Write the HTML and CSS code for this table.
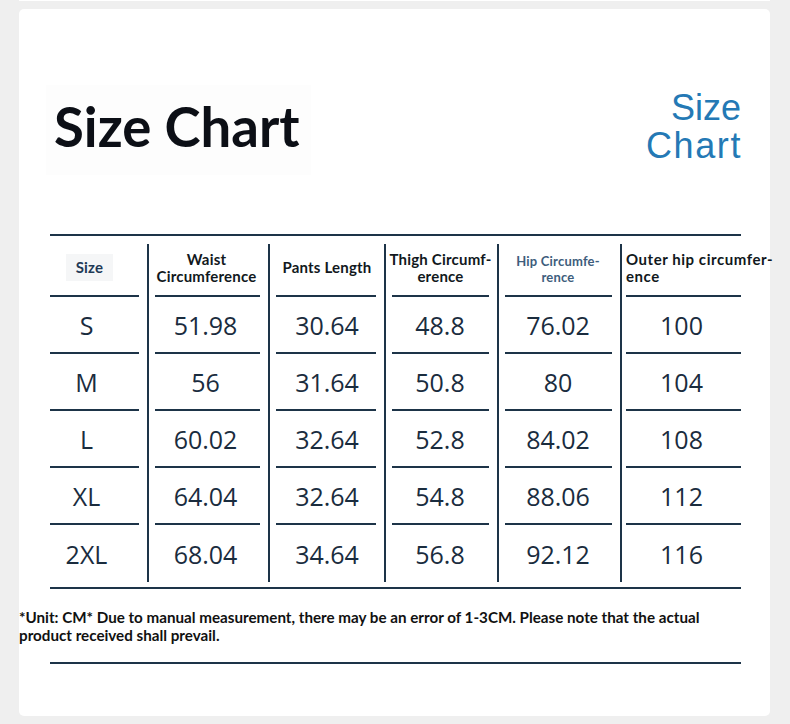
FILE: index.html
```html
<!DOCTYPE html>
<html lang="en">
<head>
<meta charset="utf-8">
<title>Size Chart</title>
<link rel="stylesheet" href="styles.css">
</head>
<body>
<div class="sliver"></div>
<main class="card">
  <header class="head">
    <div class="title-box"><h1 class="title">Size Chart</h1></div>
    <div class="title-alt">Size<br><span class="wide">Chart</span></div>
  </header>

  <div class="rule rule-top"></div>

  <div class="grid">
    <div class="cell c1 hd"><div class="in"><span class="size-tag">Size</span></div><div class="seg"></div></div>
    <div class="cell c2 hd"><div class="in">Waist<br>Circumference</div><div class="seg"></div></div>
    <div class="cell c3 hd"><div class="in">Pants Length</div><div class="seg"></div></div>
    <div class="cell c4 hd"><div class="in">Thigh Circumf-<br>erence</div><div class="seg"></div></div>
    <div class="cell c5 hd hip"><div class="in">Hip Circumfe-<br>rence</div><div class="seg"></div></div>
    <div class="cell c6 hd outer"><div class="in">Outer hip circumfer-<br>ence</div><div class="seg"></div></div>

    <div class="cell c1"><div class="in">S</div><div class="seg"></div></div>
    <div class="cell c2"><div class="in">51.98</div><div class="seg"></div></div>
    <div class="cell c3"><div class="in">30.64</div><div class="seg"></div></div>
    <div class="cell c4"><div class="in">48.8</div><div class="seg"></div></div>
    <div class="cell c5"><div class="in">76.02</div><div class="seg"></div></div>
    <div class="cell c6"><div class="in">100</div><div class="seg"></div></div>

    <div class="cell c1"><div class="in">M</div><div class="seg"></div></div>
    <div class="cell c2"><div class="in">56</div><div class="seg"></div></div>
    <div class="cell c3"><div class="in">31.64</div><div class="seg"></div></div>
    <div class="cell c4"><div class="in">50.8</div><div class="seg"></div></div>
    <div class="cell c5"><div class="in">80</div><div class="seg"></div></div>
    <div class="cell c6"><div class="in">104</div><div class="seg"></div></div>

    <div class="cell c1"><div class="in">L</div><div class="seg"></div></div>
    <div class="cell c2"><div class="in">60.02</div><div class="seg"></div></div>
    <div class="cell c3"><div class="in">32.64</div><div class="seg"></div></div>
    <div class="cell c4"><div class="in">52.8</div><div class="seg"></div></div>
    <div class="cell c5"><div class="in">84.02</div><div class="seg"></div></div>
    <div class="cell c6"><div class="in">108</div><div class="seg"></div></div>

    <div class="cell c1"><div class="in">XL</div><div class="seg"></div></div>
    <div class="cell c2"><div class="in">64.04</div><div class="seg"></div></div>
    <div class="cell c3"><div class="in">32.64</div><div class="seg"></div></div>
    <div class="cell c4"><div class="in">54.8</div><div class="seg"></div></div>
    <div class="cell c5"><div class="in">88.06</div><div class="seg"></div></div>
    <div class="cell c6"><div class="in">112</div><div class="seg"></div></div>

    <div class="cell c1"><div class="in">2XL</div></div>
    <div class="cell c2"><div class="in">68.04</div></div>
    <div class="cell c3"><div class="in">34.64</div></div>
    <div class="cell c4"><div class="in">56.8</div></div>
    <div class="cell c5"><div class="in">92.12</div></div>
    <div class="cell c6"><div class="in">116</div></div>
  </div>

  <div class="rule rule-bottom"></div>

  <p class="note">*Unit: CM* Due to manual measurement, there may be an error of 1-3CM. Please note that the actual<br>product received shall prevail.</p>

  <div class="rule rule-end"></div>
</main>
</body>
</html>
```

FILE: styles.css
```css
html, body {
  margin: 0;
  padding: 0;
  background: #efefef;
}

body {
  width: 790px;
  height: 724px;
  overflow: hidden;
}

.sliver {
  height: 1px;
  margin: 0 20px 8px 19px;
  background: #ffffff;
}

.card {
  margin: 0 20px 0 19px;
  height: 707px;
  box-sizing: border-box;
  background: #ffffff;
  border-radius: 5px;
  padding-top: 76px;
}

.head {
  display: flex;
  justify-content: space-between;
  align-items: flex-start;
  padding: 0 29px 0 27px;
}

.title-box {
  width: 265px;
  height: 90px;
  box-sizing: border-box;
  padding: 14px 0 0 8px;
  background: #fdfdfd;
}

.title {
  margin: 0;
  font-family: "Lato", "Liberation Sans", sans-serif;
  font-weight: 700;
  font-size: 54.5px;
  line-height: 1;
  color: #0c0f16;
}

.title-alt {
  margin-top: 4px;
  font-family: "Liberation Sans", Arial, sans-serif;
  font-size: 36px;
  line-height: 38px;
  color: #2479b5;
  text-align: right;
}

.wide {
  letter-spacing: 1.6px;
  margin-right: -1px;
}

.rule {
  height: 2px;
  background: #1d3448;
  margin-left: 31px;
  margin-right: 29px;
}

.rule-top {
  margin-top: 59px;
}

.grid {
  margin: 8px 29px 0 31px;
  display: grid;
  grid-template-columns: 97px 121px 116px 113px 123px 121px;
  grid-template-rows: 53px repeat(5, 57px);
}

.cell {
  display: flex;
  flex-direction: column;
  min-width: 0;
  border-left: 2px solid #1d3448;
}

.cell.c1 {
  border-left: 0;
}

.in {
  flex: 1;
  display: flex;
  align-items: center;
  justify-content: center;
  text-align: center;
  font-family: "Open Sans", "Noto Sans", sans-serif;
  font-size: 25px;
  color: #1a2c3e;
  padding-top: 1px;
}

.c1 .in {
  padding-right: 24px;
}

.c2 .in {
  padding-right: 6px;
}

.c4 .in,
.c5 .in {
  padding-right: 3px;
}

.seg {
  height: 2px;
  background: #1d3448;
  margin: 0 8px 0 6px;
}

.c1 .seg {
  margin: 0 8px 0 0;
}

.c6 .seg {
  margin: 0 0 0 4px;
}

.hd .in {
  font-family: "Lato", "Liberation Sans", sans-serif;
  font-weight: 700;
  font-size: 15px;
  line-height: 17px;
  letter-spacing: 0.2px;
  color: #111820;
  padding-top: 0;
  padding-bottom: 4px;
}

.c1.hd .in {
  padding-right: 18px;
}

.c2.hd .in {
  padding-right: 4px;
}

.c4.hd .in {
  padding-right: 2px;
}

.size-tag {
  display: inline-block;
  padding: 5px 10px;
  background: #f5f6f7;
  color: #1f3a56;
}

.hip .in {
  font-size: 13px;
  line-height: 16px;
  letter-spacing: 0.2px;
  color: #3e5d7c;
  padding-bottom: 2px;
}

.outer .in {
  justify-content: flex-start;
  text-align: left;
  white-space: nowrap;
  padding-left: 4px;
  letter-spacing: 0.55px;
}

.rule-bottom {
  margin-top: 5px;
}

.note {
  margin: 19px 0 0 0;
  font-family: "Lato", "Liberation Sans", sans-serif;
  font-weight: 700;
  font-size: 15.2px;
  line-height: 18px;
  color: #111111;
}

.rule-end {
  margin-top: 18px;
}
```
